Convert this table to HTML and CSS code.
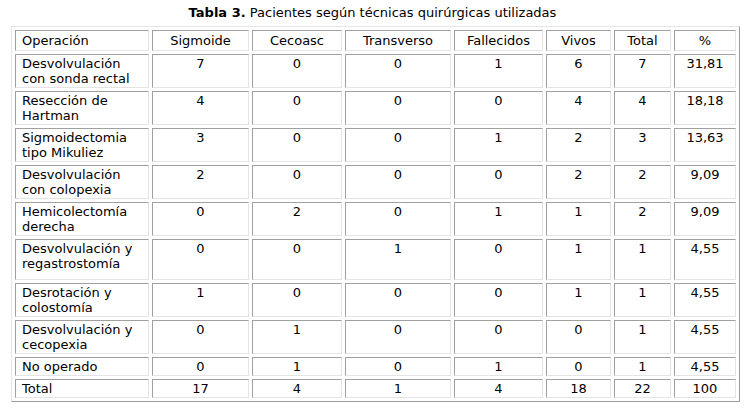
FILE: index.html
```html
<!DOCTYPE html>
<html lang="es">
<head>
<meta charset="utf-8">
<title>Tabla 3</title>
<link rel="stylesheet" href="styles.css">
</head>
<body>
<div class="page">
  <p class="title"><b>Tabla 3.</b> Pacientes según técnicas quirúrgicas utilizadas</p>
  <table class="tabla">
    <colgroup>
      <col class="c-op"><col class="c-sig"><col class="c-cec"><col class="c-tra"><col class="c-fal"><col class="c-viv"><col class="c-tot"><col class="c-pct">
    </colgroup>
    <tr class="head">
      <td class="op">Operación</td><td>Sigmoide</td><td>Cecoasc</td><td>Transverso</td><td>Fallecidos</td><td>Vivos</td><td>Total</td><td>%</td>
    </tr>
    <tr>
      <td class="op">Desvolvulación con sonda rectal</td><td>7</td><td>0</td><td>0</td><td>1</td><td>6</td><td>7</td><td>31,81</td>
    </tr>
    <tr>
      <td class="op">Resección de Hartman</td><td>4</td><td>0</td><td>0</td><td>0</td><td>4</td><td>4</td><td>18,18</td>
    </tr>
    <tr>
      <td class="op">Sigmoidectomia tipo Mikuliez</td><td>3</td><td>0</td><td>0</td><td>1</td><td>2</td><td>3</td><td>13,63</td>
    </tr>
    <tr>
      <td class="op">Desvolvulación con colopexia</td><td>2</td><td>0</td><td>0</td><td>0</td><td>2</td><td>2</td><td>9,09</td>
    </tr>
    <tr>
      <td class="op">Hemicolectomía derecha</td><td>0</td><td>2</td><td>0</td><td>1</td><td>1</td><td>2</td><td>9,09</td>
    </tr>
    <tr class="tall">
      <td class="op">Desvolvulación y regastrostomía</td><td>0</td><td>0</td><td>1</td><td>0</td><td>1</td><td>1</td><td>4,55</td>
    </tr>
    <tr>
      <td class="op">Desrotación y colostomía</td><td>1</td><td>0</td><td>0</td><td>0</td><td>1</td><td>1</td><td>4,55</td>
    </tr>
    <tr>
      <td class="op">Desvolvulación y cecopexia</td><td>0</td><td>1</td><td>0</td><td>0</td><td>0</td><td>1</td><td>4,55</td>
    </tr>
    <tr>
      <td class="op">No operado</td><td>0</td><td>1</td><td>0</td><td>1</td><td>0</td><td>1</td><td>4,55</td>
    </tr>
    <tr>
      <td class="op">Total</td><td>17</td><td>4</td><td>1</td><td>4</td><td>18</td><td>22</td><td>100</td>
    </tr>
  </table>
</div>
</body>
</html>
```

FILE: styles.css
```css
html, body {
  margin: 0;
  padding: 0;
  background: #ffffff;
}

body {
  font-family: "DejaVu Sans", Verdana, sans-serif;
  font-size: 13px;
  color: #000000;
}

.page {
  padding: 5px 0 0 11px;
}

.title {
  margin: 0 0 5px -11px;
  line-height: 16px;
  text-align: center;
}

.tabla {
  table-layout: fixed;
  width: 729px;
  border-collapse: separate;
  border-spacing: 3px;
  border: 1px solid;
  border-color: #e4e4e4 #9c9c9c #9c9c9c #e4e4e4;
}

.tabla td {
  border: 1px solid;
  border-color: #a0a0a0 #e4e4e4 #e4e4e4 #a0a0a0;
  padding: 1px 0;
  line-height: 15px;
  text-align: center;
  vertical-align: top;
}

.tabla td.op {
  text-align: left;
  padding-left: 6px;
  padding-right: 2px;
}

.tabla .head td {
  padding-top: 2px;
  padding-bottom: 2px;
}

.tabla .tall td {
  padding-bottom: 8px;
}

.c-op { width: 134px; }
.c-sig { width: 97px; }
.c-cec { width: 90px; }
.c-tra { width: 106px; }
.c-fal { width: 89px; }
.c-viv { width: 65px; }
.c-tot { width: 57px; }
.c-pct { width: 62px; }
```
